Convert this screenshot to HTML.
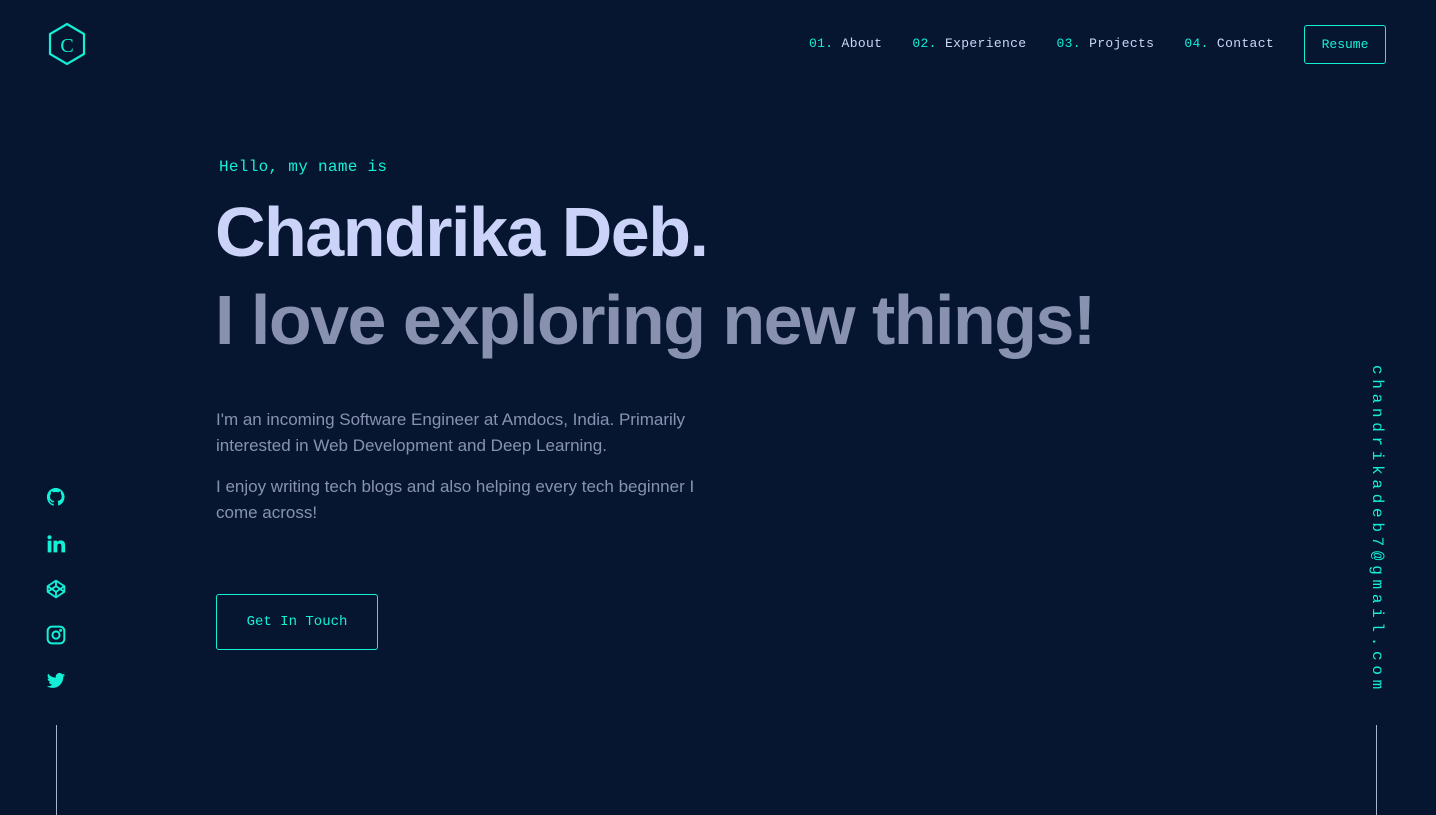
<!DOCTYPE html>
<html><head><meta charset="utf-8"><style>
body{margin:0;width:1436px;height:815px;background:#061631;overflow:hidden;position:relative;font-family:"Liberation Sans",sans-serif}
.mono{font-family:"Liberation Mono",monospace}
.nav{position:absolute;top:36px;right:162px;font-size:13px;color:#ccd6f6;display:flex;gap:30px;letter-spacing:0.35px}
.nav span b{color:#14f0d6;font-weight:normal}
.resume{position:absolute;left:1304px;top:25px;width:80px;height:37px;border:1px solid #14f0d6;border-radius:3px;color:#14f0d6;font-size:13px;line-height:37px;text-align:center}
.hello{position:absolute;left:219px;top:158px;color:#14f0d6;font-size:16px;letter-spacing:0.3px}
h1{position:absolute;left:215px;margin:0;font-weight:bold;letter-spacing:-1.5px;white-space:nowrap}
.p{position:absolute;left:216px;width:520px;color:#8892b0;font-size:17px;line-height:26px}
.btn{position:absolute;left:216px;top:594px;width:160px;height:54px;border:1px solid #14f0d6;border-radius:3px;color:#14f0d6;font-size:14px;line-height:54px;text-align:center}
.email{position:absolute;left:1368px;top:365px;writing-mode:vertical-rl;color:#14f0d6;font-size:16px;letter-spacing:4.7px}
.line{position:absolute;top:725px;width:1px;height:90px;background:#a8b2d1}
.ic{position:absolute;left:46px;width:20px;height:20px}
</style></head><body>
<svg style="position:absolute;left:47px;top:22px" width="40" height="44" viewBox="0 0 40 44"><polygon points="20,2 37,12 37,32 20,42 3,32 3,12" fill="none" stroke="#14f0d6" stroke-width="2.2"/><text x="20" y="30" text-anchor="middle" font-family="Liberation Serif" font-size="20" fill="#14f0d6">C</text></svg>
<div class="nav mono"><span><b>01.</b> About</span><span><b>02.</b> Experience</span><span><b>03.</b> Projects</span><span><b>04.</b> Contact</span></div>
<div class="resume mono">Resume</div>
<div class="hello mono">Hello, my name is</div>
<h1 style="top:192px;font-size:70px;color:#ccd3f8">Chandrika Deb.</h1>
<h1 style="top:280px;font-size:70px;color:#8892b0">I love exploring new things!</h1>
<div class="p" style="top:407px">I'm an incoming Software Engineer at Amdocs, India. Primarily interested in Web Development and Deep Learning.</div>
<div class="p" style="top:474px">I enjoy writing tech blogs and also helping every tech beginner I come across!</div>
<div class="btn mono">Get In Touch</div>
<div class="email mono">chandrikadeb7@gmail.com</div>
<div class="line" style="left:56px"></div><div class="line" style="left:1376px"></div>
<svg class="ic" style="top:487px" viewBox="0 0 24 24"><path fill="#14f0d6" d="M12 1a11 11 0 0 0-3.5 21.4c.6.1.8-.2.8-.5v-2c-3.1.7-3.8-1.4-3.8-1.4-.5-1.3-1.2-1.6-1.2-1.6-1-.7.1-.7.1-.7 1.1.1 1.7 1.1 1.7 1.1 1 1.7 2.600 1.2 3.2.9.1-.7.4-1.2.7-1.5-2.5-.3-5.1-1.200-5.1-5.5 0-1.2.4-2.2 1.1-3-.1-.3-.5-1.4.1-2.9 0 0 .9-.3 3 1.1a10.5 10.5 0 0 1 5.5 0c2.1-1.4 3-1.1 3-1.1.6 1.5.2 2.6.1 2.9.7.8 1.1 1.8 1.1 3 0 4.3-2.6 5.2-5.1 5.5.4.3.8 1 .8 2v3c0 .3.2.6.8.5A11 11 0 0 0 12 1z"/></svg>
<svg class="ic" style="top:534px" viewBox="0 0 24 24"><path fill="#14f0d6" d="M2 8h4.5v14H2zM4.2 1.5a2.5 2.5 0 1 1 0 5 2.5 2.5 0 0 1 0-5zM9 8h4.3v2c.6-1.1 2.1-2.3 4.3-2.3 4.6 0 5.4 3 5.4 6.9V22h-4.5v-6.7c0-1.6 0-3.7-2.3-3.7s-2.600 1.8-2.6 3.6V22H9z"/></svg>
<svg class="ic" style="top:579px" viewBox="0 0 24 24" fill="none" stroke="#14f0d6" stroke-width="2.2" stroke-linejoin="round"><polygon points="12,2 22,8.5 22,15.5 12,22 2,15.5 2,8.5"/><line x1="12" y1="22" x2="12" y2="15.5"/><polyline points="22,8.5 12,15.5 2,8.5"/><polyline points="2,15.5 12,8.5 22,15.5"/><line x1="12" y1="2" x2="12" y2="8.5"/></svg>
<svg class="ic" style="top:625px" viewBox="0 0 24 24" fill="none" stroke="#14f0d6" stroke-width="2.4"><rect x="2" y="2" width="20" height="20" rx="5"/><circle cx="12" cy="12" r="4.3"/><circle cx="17.6" cy="6.4" r=".6" fill="#14f0d6"/></svg>
<svg class="ic" style="top:671px" viewBox="0 0 24 24"><path fill="#14f0d6" d="M23 4.6a9 9 0 0 1-2.6.7 4.5 4.5 0 0 0 2-2.5 9 9 0 0 1-2.9 1.100 4.5 4.5 0 0 0-7.7 4.1A12.8 12.8 0 0 1 2.5 3.3a4.5 4.5 0 0 0 1.4 6 4.5 4.5 0 0 1-2-.6 4.5 4.5 0 0 0 3.6 4.5 4.5 4.5 0 0 1-2 .1 4.5 4.5 0 0 0 4.2 3.1A9 9 0 0 1 1 18.3a12.8 12.8 0 0 0 6.9 2c8.3 0 12.8-6.9 12.8-12.8v-.6A9 9 0 0 0 23 4.6z"/></svg>
</body></html>
